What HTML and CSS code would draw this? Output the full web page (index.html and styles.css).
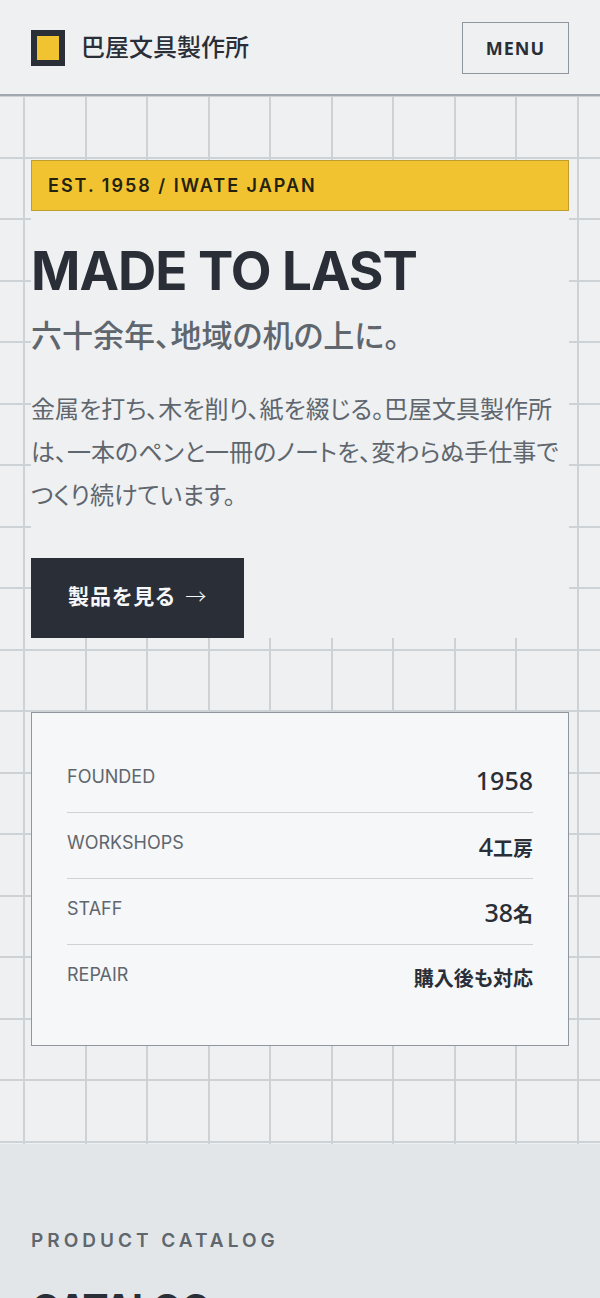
FILE: index.html
```html
<!DOCTYPE html>
<html lang="ja">
<head>
  <meta charset="utf-8">
  <meta name="viewport" content="width=device-width, initial-scale=1">
  <title>巴屋文具製作所</title>
  <link rel="stylesheet" href="styles.css">
</head>
<body>
  <header class="header">
    <a class="brand" href="#">
      <span class="brand-mark"></span>
      <span class="brand-name">巴屋文具製作所</span>
    </a>
    <button class="menu-button" type="button">MENU</button>
  </header>

  <main>
    <!-- Hero -->
    <section class="hero">
      <div class="hero-copy">
        <p class="badge">EST. 1958 / IWATE JAPAN</p>
        <h1 class="hero-title">MADE TO LAST</h1>
        <p class="hero-sub">六十余年、地域の机の上に。</p>
        <p class="hero-text">金属を打ち、木を削り、紙を綴じる。巴屋文具製作所は、一本のペンと一冊のノートを、変わらぬ手仕事でつくり続けています。</p>
        <a class="cta" href="#catalog">製品を見る <span class="arrow">→</span></a>
      </div>

      <dl class="facts">
        <div class="fact">
          <dt>FOUNDED</dt>
          <dd><span class="num">1958</span></dd>
        </div>
        <div class="fact">
          <dt>WORKSHOPS</dt>
          <dd><span class="num">4</span>工房</dd>
        </div>
        <div class="fact">
          <dt>STAFF</dt>
          <dd><span class="num">38</span>名</dd>
        </div>
        <div class="fact">
          <dt>REPAIR</dt>
          <dd>購入後も対応</dd>
        </div>
      </dl>
    </section>

    <!-- Catalog -->
    <section class="catalog" id="catalog">
      <p class="eyebrow">PRODUCT CATALOG</p>
      <h2 class="catalog-title">CATALOG</h2>
    </section>
  </main>
</body>
</html>
```
FILE: styles.css
```css
:root {
  --bg: #eef0f2;
  --panel: #f5f7f9;
  --band: #e2e6e9;
  --ink: #2a2e37;
  --muted: #5f666d;
  --line: #cdd2d7;
  --edge: #8f969d;
  --yellow: #f1c330;
  --latin: Inter, "Noto Sans CJK JP", sans-serif;
  --jp: "Noto Sans CJK JP", sans-serif;
}

* {
  box-sizing: border-box;
}

body {
  margin: 0;
  background: var(--bg);
  color: var(--ink);
  font-family: var(--jp);
  font-feature-settings: "palt";
}

p, h1, h2, dl, dd {
  margin: 0;
}

/* Header */
.header {
  display: flex;
  align-items: center;
  justify-content: space-between;
  padding: 22px 31px 20px;
  border-bottom: 2px solid #a0a7ae;
}

.brand {
  display: flex;
  align-items: flex-start;
  gap: 16px;
  color: var(--ink);
  text-decoration: none;
}

.brand-mark {
  width: 34px;
  height: 36px;
  border: 6px solid var(--ink);
  background: var(--yellow);
}

.brand-name {
  font-size: 24px;
  font-weight: 500;
  line-height: 32px;
}

.menu-button {
  height: 52px;
  padding: 0 23px;
  border: 1px solid var(--edge);
  background: transparent;
  color: var(--ink);
  font-family: "Noto Sans", sans-serif;
  font-size: 18px;
  font-weight: 700;
  letter-spacing: 1px;
}

/* Hero: two grid lines per 123px tile in each direction */
.hero {
  display: grid;
  gap: 74px;
  padding: 64px 31px 98px;
  background-image:
    linear-gradient(to right, var(--line) 2px, transparent 2px 62px, var(--line) 62px 64px, transparent 64px),
    linear-gradient(to bottom, var(--line) 2px, transparent 2px 61px, var(--line) 61px 63px, transparent 63px);
  background-position: 23px 61px;
  background-size: 123px 123px;
}

.hero-copy {
  background: var(--bg);
}

.badge {
  padding: 0 16px;
  border: 1px solid #c19d2b;
  background: var(--yellow);
  color: #24220f;
  font-family: var(--latin);
  font-size: 18px;
  font-weight: 600;
  line-height: 49px;
  letter-spacing: 2px;
}

.hero-title {
  margin-top: 28px;
  font-family: var(--latin);
  font-size: 53px;
  font-weight: 700;
  line-height: 64px;
  letter-spacing: -1px;
}

.hero-sub {
  margin-top: 9px;
  color: var(--muted);
  font-size: 31px;
  font-weight: 500;
  line-height: 44px;
}

.hero-text {
  margin-top: 30px;
  color: var(--muted);
  font-size: 24px;
  line-height: 43px;
}

.cta {
  display: inline-block;
  margin-top: 43px;
  padding: 0 37px 6px;
  background: var(--ink);
  color: var(--panel);
  font-size: 21px;
  font-weight: 700;
  line-height: 74px;
  letter-spacing: 1px;
  text-decoration: none;
  vertical-align: top;
}

.arrow {
  margin-left: 4px;
  font-weight: 300;
}

/* Company facts */
.facts {
  padding: 34px 35px;
  border: 1px solid var(--edge);
  background: var(--panel);
}

.fact {
  display: flex;
  justify-content: space-between;
  height: 66px;
  padding-top: 16px;
  border-bottom: 1px solid var(--line);
}

.fact:last-child {
  border-bottom: 0;
}

.fact dt {
  color: var(--muted);
  font-family: var(--latin);
  font-size: 18px;
  line-height: 28px;
}

.fact dd {
  font-size: 20px;
  font-weight: 700;
  line-height: 34px;
}

.num {
  font-family: "Noto Sans", sans-serif;
  font-size: 25px;
  font-weight: 500;
}

/* Catalog */
.catalog {
  padding: 83px 31px 98px;
  background: var(--band);
}

.eyebrow {
  color: var(--muted);
  font-family: var(--latin);
  font-size: 19px;
  font-weight: 600;
  line-height: 28px;
  letter-spacing: 4px;
}

.catalog-title {
  margin-top: 30px;
  font-family: var(--latin);
  font-size: 39px;
  font-weight: 700;
  line-height: 48px;
  letter-spacing: -1px;
}
```
